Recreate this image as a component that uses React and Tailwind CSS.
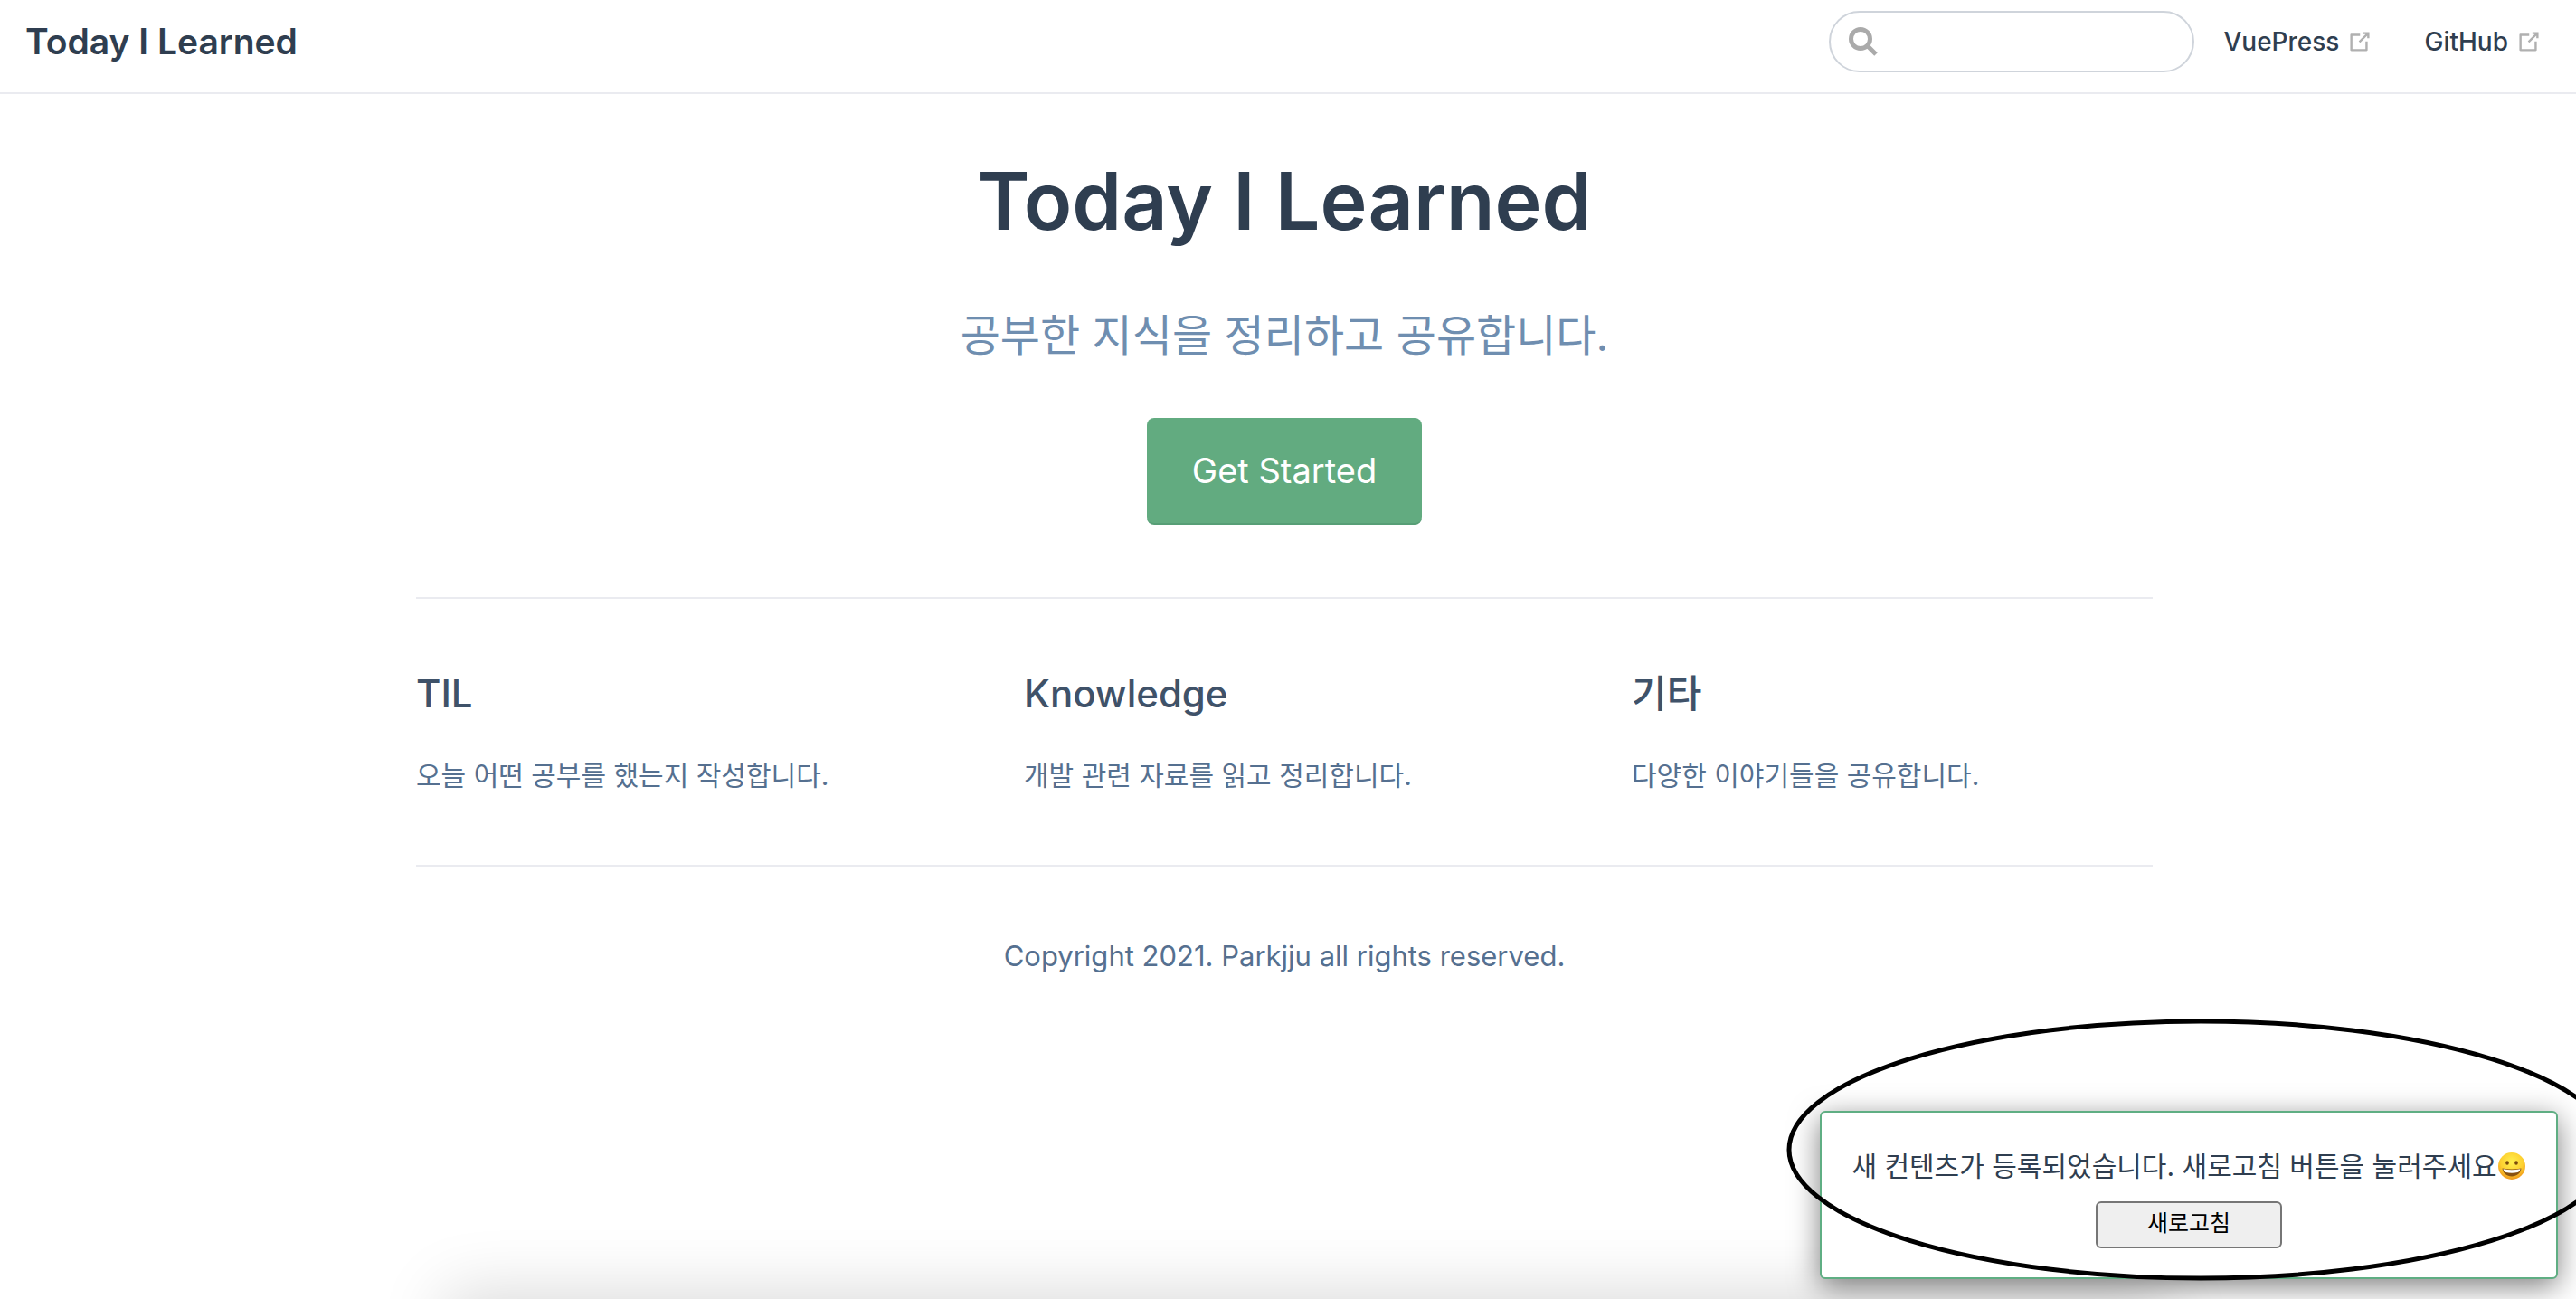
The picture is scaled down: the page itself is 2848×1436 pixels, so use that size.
import { useId } from "react";

const features = [
  { title: "TIL", text: "오늘 어떤 공부를 했는지 작성합니다." },
  { title: "Knowledge", text: "개발 관련 자료를 읽고 정리합니다." },
  { title: "기타", text: "다양한 이야기들을 공유합니다." },
];

function OutboundIcon() {
  return (
    <svg viewBox="0 0 100 100" className="size-[30px] text-[#b0b0b0]" fill="currentColor" aria-hidden="true">
      <path d="M18.8,85.1h56l0,0c2.2,0,4-1.8,4-4v-32h-8v28h-48v-48h28v-8h-32l0,0c-2.2,0-4,1.8-4,4v56C14.8,83.3,16.6,85.1,18.8,85.1z" />
      <polygon points="45.7,48.7 51.3,54.3 77.2,28.5 77.2,37.2 85.2,37.2 85.2,14.9 62.8,14.9 62.8,22.9 71.5,22.9" />
    </svg>
  );
}

function NavLink({ children }) {
  return (
    <a href="#" className="flex items-center gap-2 text-[28px] leading-[44px] font-medium">
      {children}
      <OutboundIcon />
    </a>
  );
}

function Emoji() {
  const id = useId();
  return (
    <svg viewBox="0 0 32 32" className="h-8 w-8 shrink-0" role="img" aria-label="😀">
      <defs>
        <radialGradient id={id} cx="0.5" cy="0.35" r="0.68">
          <stop offset="0" stopColor="#fff04e" />
          <stop offset="0.6" stopColor="#fdd030" />
          <stop offset="1" stopColor="#ee8f17" />
        </radialGradient>
      </defs>
      <circle cx="16" cy="16" r="15" fill={`url(#${id})`} />
      <ellipse cx="11" cy="12.5" rx="1.8" ry="2.3" fill="#7a4a0c" />
      <ellipse cx="21" cy="12.5" rx="1.8" ry="2.3" fill="#7a4a0c" />
      <path d="M5.5 18.500C12 19.800 20 19.800 26.500 18.500C26 24 21.500 27.500 16 27.500S6 24 5.500 18.500Z" fill="#8a5210" />
      <path d="M6.500 19.300C12.500 20.600 19.500 20.600 25.500 19.300C25 21.500 24 22.500 22.500 23C18 23.900 14 23.900 9.500 23C8 22.500 7 21.500 6.500 19.300Z" fill="#fff" />
    </svg>
  );
}

export default function App() {
  return (
    <div className="relative flex min-h-screen flex-col overflow-hidden bg-white font-['Inter','Noto_Sans_CJK_KR',sans-serif] text-[#2f3e50]">
      <header className="flex h-[104px] items-start justify-between border-b-2 border-[#eaebf0] pt-3 pr-[37px] pl-7">
        <a href="#" className="text-[39px] leading-[68px] font-semibold">Today I Learned</a>
        <div className="flex h-[68px] items-center">
          <label className="mr-8 flex h-[68px] w-[404px] items-center rounded-full border-2 border-[#cfd4db] pl-5">
            <svg viewBox="0 0 32 32" className="size-8 shrink-0" fill="none" stroke="#aaa" strokeWidth="5" aria-hidden="true">
              <circle cx="13" cy="13" r="10.500" />
              <path d="M20 20L30 30" />
            </svg>
            <input type="search" aria-label="Search" className="min-w-0 flex-1 bg-transparent px-3 text-[28px] outline-none" />
          </label>
          <nav className="flex items-center gap-14">
            <NavLink>VuePress</NavLink>
            <NavLink>GitHub</NavLink>
          </nav>
        </div>
      </header>

      <main className="mr-2 flex flex-col items-center">
        <div className="w-full max-w-[1920px]">
          <section className="flex flex-col items-center pt-[58px] text-center">
            <h1 className="text-[88px] leading-[120px] font-semibold">Today I Learned</h1>
            <p className="mt-14 text-5xl leading-[66px] text-[#6f8eb0]">공부한 지식을 정리하고 공유합니다.</p>
            <a href="#" className="mt-[58px] flex h-[118px] items-center rounded-lg border-b-2 border-[#579e76] bg-[#62ab80] px-[50px] text-[38px] text-white">
              Get Started
            </a>
          </section>
          <section className="mt-20 grid grid-cols-3 gap-x-[96px] border-t-2 border-[#eaebf0] pt-[72px] pb-[72px]">
            {features.map((f) => (
              <div key={f.title}>
                <h2 className="text-[42px] leading-[66px] font-medium text-[#3f5269]">{f.title}</h2>
                <p className="mt-[30px] text-[30px] leading-[54px] text-[#557090]">{f.text}</p>
              </div>
            ))}
          </section>
          <footer className="border-t-2 border-[#eaebf0] pt-[72px] text-center text-[31px] leading-[54px] text-[#557090]">
            Copyright 2021. Parkjju all rights reserved.
          </footer>
        </div>
      </main>

      <div className="absolute top-full right-[460px] left-[500px] h-24 shadow-[0_0_72px_8px_rgba(0,0,0,0.15)]" />

      <aside className="absolute right-5 bottom-[22px] flex h-[186px] w-[816px] flex-col items-center rounded-md border-2 border-[#5fae83] bg-white pt-[34px] shadow-[0_8px_32px_rgba(0,0,0,0.5)]">
        <p className="flex items-center text-[30px] leading-[50px] whitespace-nowrap">
          새 컨텐츠가 등록되었습니다. 새로고침 버튼을 눌러주세요
          <Emoji />
        </p>
        <button type="button" className="mt-[14px] h-[52px] w-[206px] rounded-md border-2 border-[#767676] bg-[#efefef] pb-1 text-[25px] leading-none text-black">
          새로고침
        </button>
      </aside>

      <svg viewBox="0 0 916 290" className="pointer-events-none absolute -right-[43px] bottom-5 h-[290px] w-[916px]" fill="none" aria-hidden="true">
        <ellipse cx="458" cy="145" rx="455" ry="142" stroke="#000" strokeWidth="5" />
      </svg>
    </div>
  );
}
